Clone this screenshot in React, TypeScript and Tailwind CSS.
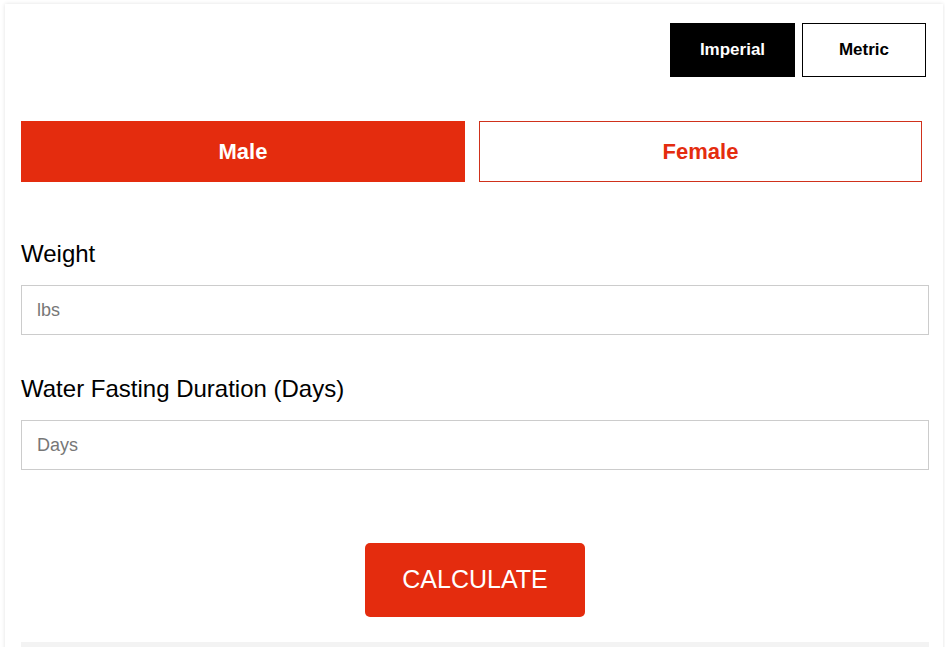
import { useState } from 'react'

export default function App() {
  const [unit, setUnit] = useState<'imperial' | 'metric'>('imperial')
  const [sex, setSex] = useState<'male' | 'female'>('male')

  return (
    <div className="min-h-[647px] bg-white pt-[4px] pl-[5px] pr-[2px] font-['Liberation_Sans',Arial,sans-serif] overflow-hidden">
      <div className="h-[660px] bg-white shadow-[0_0_4px_rgba(0,0,0,0.12)] px-[16px] pt-[19px]">
        <div className="flex justify-end gap-[7px] pr-[1px]">
          <button
            onClick={() => setUnit('imperial')}
            className={`w-[125px] h-[54px] text-[17px] font-bold border ${unit === 'imperial' ? 'bg-black text-white border-black' : 'bg-white text-black border-black'}`}
          >
            Imperial
          </button>
          <button
            onClick={() => setUnit('metric')}
            className={`w-[124px] h-[54px] text-[17px] font-bold border ${unit === 'metric' ? 'bg-black text-white border-black' : 'bg-white text-black border-black'}`}
          >
            Metric
          </button>
        </div>

        <div className="flex gap-[14px] mt-[44px] w-[901px]">
          <button
            onClick={() => setSex('male')}
            className={`w-[444px] h-[61px] text-[22px] font-bold border ${sex === 'male' ? 'bg-[#e42c0e] text-white border-[#e42c0e]' : 'bg-white text-[#e42c0e] border-[#d0311b]'}`}
          >
            Male
          </button>
          <button
            onClick={() => setSex('female')}
            className={`w-[443px] h-[61px] text-[22px] font-bold border ${sex === 'female' ? 'bg-[#e42c0e] text-white border-[#e42c0e]' : 'bg-white text-[#e42c0e] border-[#d0311b]'}`}
          >
            Female
          </button>
        </div>

        <label className="block mt-[58px] text-[24px] leading-[28px] text-black">Weight</label>
        <input
          placeholder="lbs"
          className="block mt-[17px] w-[908px] h-[50px] border border-[#ccc] px-[15px] text-[18px] placeholder:text-[#777] outline-none"
        />

        <label className="block mt-[40px] text-[24px] leading-[28px] text-black">Water Fasting Duration (Days)</label>
        <input
          placeholder="Days"
          className="block mt-[17px] w-[908px] h-[50px] border border-[#ccc] px-[15px] text-[18px] placeholder:text-[#777] outline-none"
        />

        <div className="flex justify-center w-[908px] mt-[73px]">
          <button className="w-[220px] h-[74px] rounded-[5px] bg-[#e42c0e] text-white text-[25px] uppercase">
            Calculate
          </button>
        </div>

        <div className="mt-[25px] w-[908px] h-[40px] bg-[#f3f3f3]" />
      </div>
    </div>
  )
}
